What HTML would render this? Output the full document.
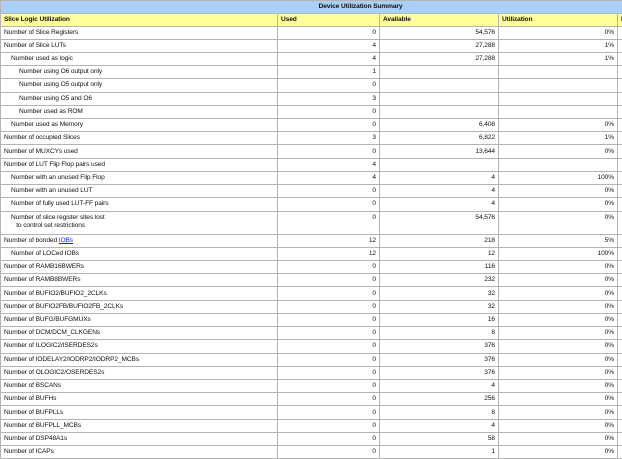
<!DOCTYPE html>
<html><head><meta charset="utf-8"><style>
html,body{margin:0;padding:0;background:#fff;width:622px;height:449px;overflow:hidden}
table{position:absolute;left:0;top:0;border-collapse:collapse;table-layout:fixed;width:760px;font-family:"Liberation Sans",Arial,sans-serif;font-size:6.6px;letter-spacing:-0.1px;color:#111}
td{border:1px solid #b4b4b4;padding:0 3px;height:12.22px;line-height:8px;white-space:nowrap;overflow:hidden}
td.n{text-align:right}
tr.t td{background:#a8d0f8;font-weight:bold;text-align:center;height:11.5px;padding-left:0}
tr.h td{background:#ffff9c;font-weight:bold;height:12px}
.i1{padding-left:10px}.i2{padding-left:18px}
tr.d td{height:20px}
a{color:#1a1aee;text-decoration:underline}
</style></head><body>
<table>
<colgroup><col style="width:277px"><col style="width:102px"><col style="width:119px"><col style="width:119px"><col style="width:143px"></colgroup>
<tr class="t"><td colspan="5" style="padding-right:40px">Device Utilization Summary</td></tr>
<tr class="h"><td>Slice Logic Utilization</td><td>Used</td><td>Available</td><td>Utilization</td><td>Note(s)</td></tr>
<tr><td>Number of Slice Registers</td><td class="n">0</td><td class="n">54,576</td><td class="n">0%</td><td></td></tr>
<tr><td>Number of Slice LUTs</td><td class="n">4</td><td class="n">27,288</td><td class="n">1%</td><td></td></tr>
<tr><td class="i1">Number used as logic</td><td class="n">4</td><td class="n">27,288</td><td class="n">1%</td><td></td></tr>
<tr><td class="i2">Number using O6 output only</td><td class="n">1</td><td></td><td></td><td></td></tr>
<tr><td class="i2">Number using O5 output only</td><td class="n">0</td><td></td><td></td><td></td></tr>
<tr><td class="i2">Number using O5 and O6</td><td class="n">3</td><td></td><td></td><td></td></tr>
<tr><td class="i2">Number used as ROM</td><td class="n">0</td><td></td><td></td><td></td></tr>
<tr><td class="i1">Number used as Memory</td><td class="n">0</td><td class="n">6,408</td><td class="n">0%</td><td></td></tr>
<tr><td>Number of occupied Slices</td><td class="n">3</td><td class="n">6,822</td><td class="n">1%</td><td></td></tr>
<tr><td>Number of MUXCYs used</td><td class="n">0</td><td class="n">13,644</td><td class="n">0%</td><td></td></tr>
<tr><td>Number of LUT Flip Flop pairs used</td><td class="n">4</td><td></td><td></td><td></td></tr>
<tr><td class="i1">Number with an unused Flip Flop</td><td class="n">4</td><td class="n">4</td><td class="n">100%</td><td></td></tr>
<tr><td class="i1">Number with an unused LUT</td><td class="n">0</td><td class="n">4</td><td class="n">0%</td><td></td></tr>
<tr><td class="i1">Number of fully used LUT-FF pairs</td><td class="n">0</td><td class="n">4</td><td class="n">0%</td><td></td></tr>
<tr class="d"><td class="i1" style="vertical-align:top;padding-top:2px">Number of slice register sites lost<br>&nbsp;&nbsp;&nbsp;to control set restrictions</td><td class="n" style="vertical-align:top;padding-top:2px">0</td><td class="n" style="vertical-align:top;padding-top:2px">54,576</td><td class="n" style="vertical-align:top;padding-top:2px">0%</td><td></td></tr>
<tr><td>Number of bonded <a>IOBs</a></td><td class="n">12</td><td class="n">218</td><td class="n">5%</td><td></td></tr>
<tr><td class="i1">Number of LOCed IOBs</td><td class="n">12</td><td class="n">12</td><td class="n">100%</td><td></td></tr>
<tr><td>Number of RAMB16BWERs</td><td class="n">0</td><td class="n">116</td><td class="n">0%</td><td></td></tr>
<tr><td>Number of RAMB8BWERs</td><td class="n">0</td><td class="n">232</td><td class="n">0%</td><td></td></tr>
<tr><td>Number of BUFIO2/BUFIO2_2CLKs</td><td class="n">0</td><td class="n">32</td><td class="n">0%</td><td></td></tr>
<tr><td>Number of BUFIO2FB/BUFIO2FB_2CLKs</td><td class="n">0</td><td class="n">32</td><td class="n">0%</td><td></td></tr>
<tr><td>Number of BUFG/BUFGMUXs</td><td class="n">0</td><td class="n">16</td><td class="n">0%</td><td></td></tr>
<tr><td>Number of DCM/DCM_CLKGENs</td><td class="n">0</td><td class="n">8</td><td class="n">0%</td><td></td></tr>
<tr><td>Number of ILOGIC2/ISERDES2s</td><td class="n">0</td><td class="n">376</td><td class="n">0%</td><td></td></tr>
<tr><td>Number of IODELAY2/IODRP2/IODRP2_MCBs</td><td class="n">0</td><td class="n">376</td><td class="n">0%</td><td></td></tr>
<tr><td>Number of OLOGIC2/OSERDES2s</td><td class="n">0</td><td class="n">376</td><td class="n">0%</td><td></td></tr>
<tr><td>Number of BSCANs</td><td class="n">0</td><td class="n">4</td><td class="n">0%</td><td></td></tr>
<tr><td>Number of BUFHs</td><td class="n">0</td><td class="n">256</td><td class="n">0%</td><td></td></tr>
<tr><td>Number of BUFPLLs</td><td class="n">0</td><td class="n">8</td><td class="n">0%</td><td></td></tr>
<tr><td>Number of BUFPLL_MCBs</td><td class="n">0</td><td class="n">4</td><td class="n">0%</td><td></td></tr>
<tr><td>Number of DSP48A1s</td><td class="n">0</td><td class="n">58</td><td class="n">0%</td><td></td></tr>
<tr><td>Number of ICAPs</td><td class="n">0</td><td class="n">1</td><td class="n">0%</td><td></td></tr>
</table>
</body></html>
